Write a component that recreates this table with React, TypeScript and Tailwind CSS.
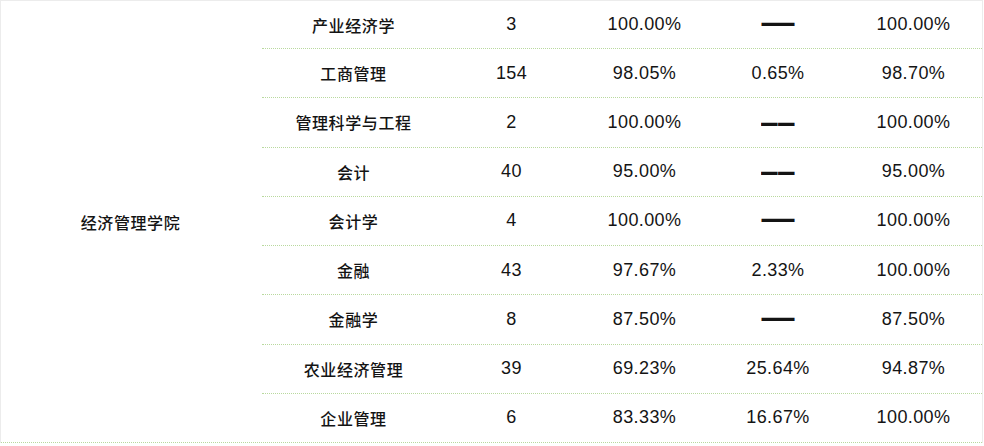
const rows: { name: string; n: string; a: string; b: string; c: string }[] = [
  { name: '产业经济学', n: '3', a: '100.00%', b: '—', c: '100.00%' },
  { name: '工商管理', n: '154', a: '98.05%', b: '0.65%', c: '98.70%' },
  { name: '管理科学与工程', n: '2', a: '100.00%', b: '——', c: '100.00%' },
  { name: '会计', n: '40', a: '95.00%', b: '——', c: '95.00%' },
  { name: '会计学', n: '4', a: '100.00%', b: '—', c: '100.00%' },
  { name: '金融', n: '43', a: '97.67%', b: '2.33%', c: '100.00%' },
  { name: '金融学', n: '8', a: '87.50%', b: '—', c: '87.50%' },
  { name: '农业经济管理', n: '39', a: '69.23%', b: '25.64%', c: '94.87%' },
  { name: '企业管理', n: '6', a: '83.33%', b: '16.67%', c: '100.00%' },
]

const cjk = "font-['Noto_Sans_CJK_SC',sans-serif] text-[16px] tracking-[0.6px] font-medium"
const num = "font-['Liberation_Sans',Arial,sans-serif] text-[18px] tracking-[0.4px]"

function Dash({ value }: { value: string }) {
  if (value === '—') {
    return (
      <span className="font-['Liberation_Sans',Arial,sans-serif] font-bold text-[33px] leading-none -mt-[6px]">
        —
      </span>
    )
  }
  if (value === '——') {
    return (
      <span className="inline-block scale-y-200 font-['Liberation_Sans',Arial,sans-serif] font-bold text-[16.5px] leading-none tracking-[0.5px] -mt-[2px]">
        ——
      </span>
    )
  }
  return <span className={num}>{value}</span>
}

export default function App() {
  const heights = ['h-[48px]', 'h-[49.25px]', 'h-[49.25px]', 'h-[49.25px]', 'h-[49.25px]', 'h-[49.25px]', 'h-[49.25px]', 'h-[49.25px]', 'h-[48.25px]']
  return (
    <div className="w-[984px] h-[446px] bg-white text-[#141414]">
      <div className="w-[983px] border-t border-x border-[#ececec]">
        <div className="flex">
          <div className={`w-[261px] flex items-center justify-center ${cjk}`}>
            <span className="mr-[2px]">经济管理学院</span>
          </div>
          <div className="flex flex-col w-[720px]">
            {rows.map((r, i) => (
              <div
                key={r.name}
                className={`grid grid-cols-[183px_133px_133px_134px_137px] items-center ${heights[i]} ${
                  i < rows.length - 1 ? 'border-b border-dotted border-[#b9d99e]' : ''
                }`}
              >
                <div className={`text-center ${cjk}`}>{r.name}</div>
                <div className={`text-center ${num}`}>{r.n}</div>
                <div className={`text-center ${num}`}>{r.a}</div>
                <div className="flex justify-center items-center">
                  <Dash value={r.b} />
                </div>
                <div className={`text-center ${num}`}>{r.c}</div>
              </div>
            ))}
          </div>
        </div>
        <div className="border-t border-dotted border-[#b9d99e]" />
      </div>
    </div>
  )
}
